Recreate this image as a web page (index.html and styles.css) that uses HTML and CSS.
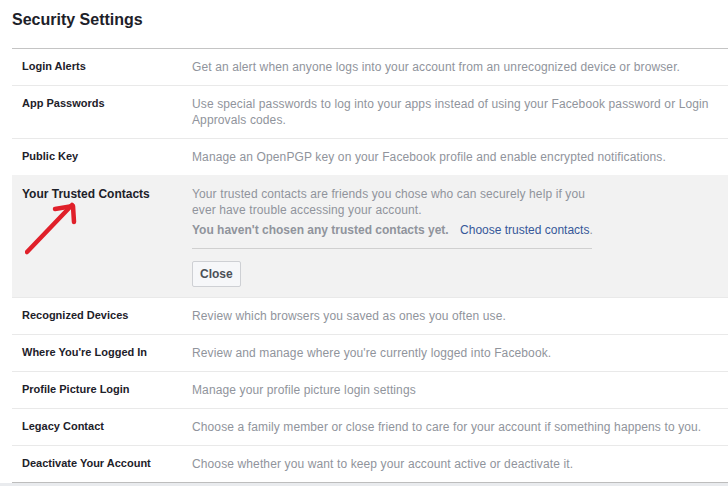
FILE: index.html
```html
<!DOCTYPE html>
<html>
<head>
<meta charset="utf-8">
<link rel="stylesheet" href="styles.css">
</head>
<body>
<div class="page">
  <h1 class="title">Security Settings</h1>
  <div class="list">
    <div class="row">
      <div class="label">Login Alerts</div>
      <div class="desc">Get an alert when anyone logs into your account from an unrecognized device or browser.</div>
    </div>
    <div class="row">
      <div class="label">App Passwords</div>
      <div class="desc">Use special passwords to log into your apps instead of using your Facebook password or Login Approvals codes.</div>
    </div>
    <div class="row">
      <div class="label">Public Key</div>
      <div class="desc">Manage an OpenPGP key on your Facebook profile and enable encrypted notifications.</div>
    </div>
    <div class="row open">
      <div class="label">Your Trusted Contacts</div>
      <div class="panel">
        <div class="desc">Your trusted contacts are friends you chose who can securely help if you ever have trouble accessing your account.</div>
        <div class="status"><span class="strong">You haven't chosen any trusted contacts yet.</span> <a class="link" href="#">Choose trusted contacts</a>.</div>
        <div class="sep"></div>
        <button class="btn" type="button">Close</button>
      </div>
      <svg class="arrow" width="60" height="60" viewBox="0 0 60 60">
        <path d="M2 51 L47 4" stroke="#e0202a" stroke-width="4.5" stroke-linecap="round" fill="none"/>
        <path d="M30 8 L48 5 L49 21" stroke="#e0202a" stroke-width="4.5" stroke-linecap="round" stroke-linejoin="round" fill="none"/>
      </svg>
    </div>
    <div class="row">
      <div class="label">Recognized Devices</div>
      <div class="desc">Review which browsers you saved as ones you often use.</div>
    </div>
    <div class="row">
      <div class="label">Where You're Logged In</div>
      <div class="desc">Review and manage where you're currently logged into Facebook.</div>
    </div>
    <div class="row">
      <div class="label">Profile Picture Login</div>
      <div class="desc">Manage your profile picture login settings</div>
    </div>
    <div class="row">
      <div class="label">Legacy Contact</div>
      <div class="desc">Choose a family member or close friend to care for your account if something happens to you.</div>
    </div>
    <div class="row last">
      <div class="label">Deactivate Your Account</div>
      <div class="desc">Choose whether you want to keep your account active or deactivate it.</div>
    </div>
  </div>
</div>
<div class="footer"></div>
</body>
</html>
```

FILE: styles.css
```css
html, body {
  margin: 0;
  padding: 0;
  background: #ffffff;
  font-family: "Liberation Sans", Arial, Helvetica, sans-serif;
  font-size: 12px;
  line-height: 16px;
  color: #1d2129;
}

.page {
  padding-left: 12px;
}

.title {
  margin: 0;
  padding: 10px 0 18px 0;
  font-size: 16px;
  line-height: 20px;
  font-weight: bold;
  color: #1d2129;
}

.list {
  border-top: 1px solid #c4c4c4;
  border-bottom: 1px solid #bdbdbd;
}

.row {
  position: relative;
  display: grid;
  grid-template-columns: 180px 1fr;
  padding: 10px 10px 10px 0;
  border-top: 1px solid #e9e9e9;
}

.row:first-child {
  border-top: none;
}

.row.open {
  background: #f2f2f2;
  border-top-color: #f2f2f2;
}

.label {
  padding-left: 10px;
  font-size: 11px;
  line-height: 15px;
  font-weight: bold;
  color: #1d2129;
}

.row.open .label {
  font-size: 12px;
  line-height: 16px;
}

.desc {
  color: #90949c;
  letter-spacing: 0.12px;
}

.panel {
  width: 400px;
}

.status {
  margin-top: 4px;
  color: #90949c;
  white-space: nowrap;
}

.strong {
  font-weight: bold;
}

.link {
  color: #365899;
  text-decoration: none;
  margin-left: 8px;
}

.sep {
  margin-top: 10px;
  height: 1px;
  background: #d0d0d0;
}

.btn {
  display: block;
  margin-top: 12px;
  height: 26px;
  padding: 0 7px;
  font-family: "Liberation Sans", Arial, Helvetica, sans-serif;
  font-size: 12px;
  font-weight: bold;
  color: #4b4f56;
  background: #f6f7f9;
  border: 1px solid #ced0d4;
  border-radius: 2px;
}

.arrow {
  position: absolute;
  left: 13px;
  top: 25px;
}

.footer {
  height: 20px;
  background: #e9ebee;
}
```
